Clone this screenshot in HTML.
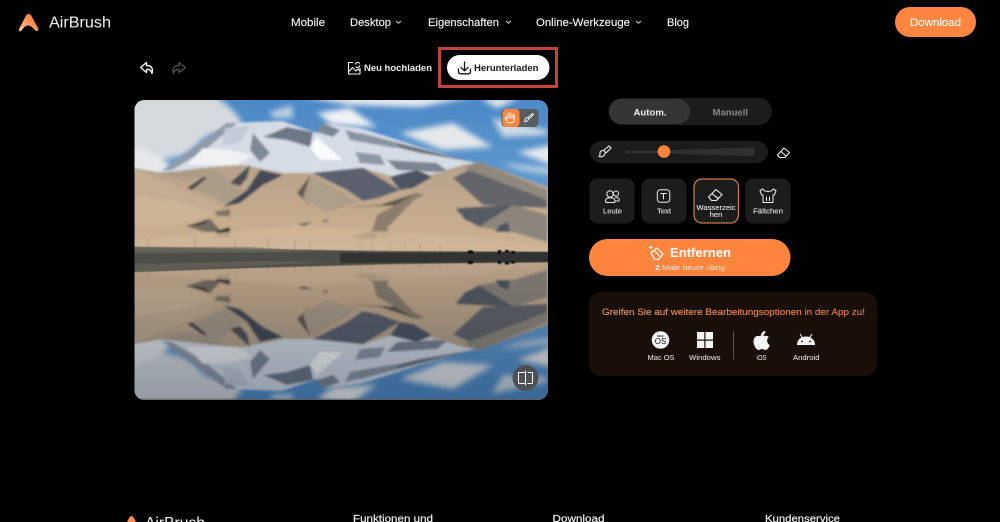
<!DOCTYPE html>
<html lang="de"><head><meta charset="utf-8"><title>AirBrush</title>
<style>
html,body{margin:0;padding:0;background:#000;width:1000px;height:522px;overflow:hidden}
svg{display:block}
text{font-family:"Liberation Sans",sans-serif}
</style></head><body>
<svg width="1000" height="522" viewBox="0 0 1000 522" xmlns="http://www.w3.org/2000/svg">
<defs>
<linearGradient id="logo" x1="0" y1="1" x2="1" y2="0"><stop offset="0" stop-color="#ffc09a"/><stop offset=".6" stop-color="#ff8e4f"/><stop offset="1" stop-color="#ff7a35"/></linearGradient>
<linearGradient id="sky" x1="0" y1="0" x2="0" y2="1"><stop offset="0" stop-color="#4b88c6"/><stop offset="1" stop-color="#6fa5d6"/></linearGradient>
<linearGradient id="promo" x1="0" y1="0" x2="1" y2="0"><stop offset="0" stop-color="#d9a06c"/><stop offset=".35" stop-color="#e98f50"/><stop offset="1" stop-color="#f4702e"/></linearGradient>
<linearGradient id="ground" x1="0" y1="0" x2="0" y2="1"><stop offset="0" stop-color="#b5a28c"/><stop offset=".5" stop-color="#c4aa8c"/><stop offset="1" stop-color="#cdb294"/></linearGradient>
<linearGradient id="refl" x1="0" y1="0" x2="0" y2="1"><stop offset="0" stop-color="#0a0f14" stop-opacity=".1"/><stop offset="1" stop-color="#0a1a2a" stop-opacity=".32"/></linearGradient>
<filter id="b1" x="-20%" y="-20%" width="140%" height="140%"><feGaussianBlur stdDeviation="1.100"/></filter>
<filter id="b05" x="-20%" y="-20%" width="140%" height="140%"><feGaussianBlur stdDeviation=".6"/></filter>
<filter id="b4" x="-30%" y="-30%" width="160%" height="160%"><feGaussianBlur stdDeviation="3"/></filter>
<clipPath id="photo"><rect x="134.500" y="100" width="413.500" height="300" rx="10"/></clipPath>
<clipPath id="upper"><rect x="130" y="96" width="425" height="158"/></clipPath>
<g id="scene" clip-path="url(#upper)">
<rect x="130" y="96" width="425" height="160" fill="url(#sky)"/>
<g filter="url(#b4)">
<path d="M130 96H215C235 110 245 122 240 128 225 135 210 130 200 142 185 160 165 160 130 162Z" fill="#d6d9dd"/>
<path d="M130 148C150 148 165 160 172 168 165 178 150 175 130 172Z" fill="#e6e8ea"/>
<path d="M317 113 350 108 377 127 333 125Z" fill="#f2f3f4"/>
<path d="M270 112 292 105 293 118 272 118Z" fill="#bcd0e2"/>
<path d="M400 133 453 123 493 147 443 150Z" fill="#e6e9eb"/>
<path d="M492 118 547 130 547 135 503 137Z" fill="#cfdae5"/>
<path d="M517 152 552 145 552 165Z" fill="#e6eaee"/>
<path d="M300 96H476L420 107 350 105Z" fill="#e8ecf0"/>
<path d="M480 98H520L497 108Z" fill="#e8ecf0"/>
<path d="M500 163 552 168 552 175 520 170Z" fill="#bcd0e2"/>
</g>
<g filter="url(#b1)">
<path d="M162 171 227 123 282 121 317 133 323 123 360 128 420 147 475 163 450 178 300 185 190 178Z" fill="#d5dce5"/>
<path d="M162 171 227 123 237 123 205 150 172 170Z" fill="#8f9bab"/>
<path d="M287 127 313 132 310 147 287 140 263 137Z" fill="#6d7785"/>
<path d="M253 133 270 153 260 162 250 150Z" fill="#7f8a98"/>
<path d="M317 132 323 123 340 130 333 137Z" fill="#7c8693"/>
<path d="M360 133 473 162 420 153 367 140Z" fill="#6b7380"/>
<path d="M345 130 400 143 395 148 350 140Z" fill="#8b95a2"/>
<path d="M387 160 437 163 450 173 397 170Z" fill="#7a8492"/>
<path d="M355 152 380 155 385 165 360 163Z" fill="#8d97a5"/>
<path d="M317 137 343 160 320 160 310 147Z" fill="#fafbfb"/>
<path d="M187 165 203 148 230 150 253 155 237 165 207 165Z" fill="#eff1f2"/>
<path d="M225 128 250 126 240 142 222 146Z" fill="#c3cbd6"/>
</g>
<g filter="url(#b1)">
<path d="M134 168 160 173 213 167 243 165 283 173 317 173 363 168 393 177 417 170 430 175 463 165 480 162 520 177 550 188 550 255 134 255Z" fill="url(#ground)"/>
<path d="M313 173 363 168 400 190 378 198 363 201 347 190Z" fill="#5b616e"/>
<path d="M390 177 417 170 432 177 413 188 400 190Z" fill="#4e5562"/>
<path d="M134 168 220 207 195 222 134 220Z" fill="#c3ad93"/>
<path d="M134 195 185 203 215 214 180 225 134 225Z" fill="#ccb497"/>
<path d="M160 174 213 168 243 190 228 205 200 192 187 188 205 176 185 180Z" fill="#ab9c88"/>
<path d="M187 188 203 177 207 178 192 190Z" fill="#4b4b4c"/>
<path d="M230 183 250 165 247 178 240 186Z" fill="#4f4f52"/>
<path d="M223 207 247 190 260 170 283 175 263 185 240 203Z" fill="#454a52"/>
<path d="M297 193 310 176 360 202 327 212 307 202Z" fill="#ad9e8a"/>
<path d="M297 193 310 176 303 198 312 208Z" fill="#5f5a52"/>
<path d="M344 208 380 205 417 193 424 195 400 205Z" fill="#59544b"/>
<path d="M377 215 417 193 424 195 414 200 387 228 392 238 360 240 372 232Z" fill="#8a7e6e"/>
<path d="M353 237 373 230 378 238 358 239Z" fill="#403e3b"/>
<path d="M453 178 473 168 547 195 547 208 483 205Z" fill="#63656a"/>
<path d="M463 168 480 162 547 190 547 200 495 180Z" fill="#8f887d"/>
<path d="M455 210 513 205 547 215 547 242 513 232 477 227Z" fill="#8b857b"/>
<path d="M456 208 513 205 480 226 465 220Z" fill="#575b63"/>
<path d="M500 225 508 222 510 232 495 232Z" fill="#4f5662"/>
<path d="M186 226 210 219 222 232 205 232Z" fill="#746d60"/>
<path d="M186 227 210 219 204 224Z" fill="#343433"/>
<path d="M216 231 230 227 230 237 218 237Z" fill="#3b3936"/>
<path d="M214 212 230 209 230 216 218 216Z" fill="#7e7566"/>
<path d="M298 224 312 222 304 226Z" fill="#55534d"/>
<path d="M322 221 328 219 326 222Z" fill="#4a4a48"/>
<path d="M134 240 300 226 480 238 550 248 550 255 134 255Z" fill="#d0b698" opacity=".85"/>
</g>
<g stroke="#8a7b68" stroke-width=".6" opacity=".6">
<path d="M148 239V247M195 238V249M235 239V250M268 238V250M295 240V251M310 240V251M360 243V252M372 243V252M390 243V252M405 243V252M420 244V252M440 245V253"/>
</g>
</g>
</defs>

<rect width="1000" height="522" fill="#000"/>

<!-- header -->
<path d="M28.500 14 C30.500 14 31 15 32 17 L38 28 C39.200 30.500 36.800 32 35 30.300 C32.500 27 30 25.500 28 25.500 C26 25.500 23.500 27.500 21.500 30.500 C20 32.200 18 31 19.500 28 L25.500 16.500 C26.300 15 27 14 28.500 14Z" fill="url(#logo)"/>
<text x="49" y="27.500" font-size="16" fill="#f2f2f2" textLength="62" lengthAdjust="spacingAndGlyphs">AirBrush</text>
<g font-size="11" fill="#f0f0f0" stroke="#f0f0f0" stroke-width=".15">
<text x="291" y="26" textLength="34" lengthAdjust="spacingAndGlyphs">Mobile</text>
<text x="350" y="26" textLength="41" lengthAdjust="spacingAndGlyphs">Desktop</text>
<text x="428" y="26" textLength="71" lengthAdjust="spacingAndGlyphs">Eigenschaften</text>
<text x="536" y="26" textLength="94" lengthAdjust="spacingAndGlyphs">Online-Werkzeuge</text>
<text x="667" y="26" textLength="22" lengthAdjust="spacingAndGlyphs">Blog</text>
</g>
<g fill="none" stroke="#d8d8d8" stroke-width="1">
<path d="M396 21 398.500 23.200 401 21"/><path d="M506 21 508.500 23.200 511 21"/><path d="M636 21 638.500 23.200 641 21"/>
</g>
<rect x="895" y="7" width="81" height="30" rx="15" fill="#ff8540"/>
<text x="910" y="26" font-size="11" fill="#fff" textLength="51" lengthAdjust="spacingAndGlyphs" stroke="#fff" stroke-width=".1">Download</text>

<!-- toolbar -->
<g fill="none" stroke-linejoin="round" stroke-linecap="round" stroke-width="1.400">
<path d="M146.500 62.500 140.500 67.500 146.500 72.500V69.500C149 68.800 151 70 152 73.500 153.500 68 151 65.500 146.500 65.500Z" stroke="#f2f2f2"/>
<path d="M179 62.500 185.500 67.500 179 72.500V69.500C176.500 68.800 174.500 70 173.500 73.500 172 68 174.500 65.500 179 65.500Z" stroke="#4d4d4d"/>
</g>
<g fill="none" stroke="#f2f2f2" stroke-width="1.100" stroke-linejoin="round">
<path d="M353 62.500H348.500V74H360V68"/><path d="M348.500 72 352.500 67.500 356 71 358 69 360 71"/><path d="M355 64.500C356 62 358.500 62 359.800 63.500M360 65.500C359 68 356.500 68 355.500 66.500"/>
</g>
<text x="364" y="71.200" font-size="9" font-weight="700" fill="#eee" textLength="68" lengthAdjust="spacingAndGlyphs">Neu hochladen</text>
<rect x="439.500" y="48.500" width="117" height="38" fill="none" stroke="#c0443c" stroke-width="3"/>
<rect x="447" y="55" width="102.500" height="25" rx="12.500" fill="#fff"/>
<g fill="none" stroke="#111" stroke-width="1.300" stroke-linecap="round" stroke-linejoin="round">
<path d="M464.500 62V70.500M461 67.500 464.500 70.800 468 67.500"/><path d="M458.500 69V71.500C458.500 73 459.500 73.800 461 73.800H468C469.500 73.800 470.500 73 470.500 71.500V69"/>
</g>
<text x="474" y="71" font-size="9" font-weight="700" fill="#1a1a1a" textLength="64.500" lengthAdjust="spacingAndGlyphs">Herunterladen</text>

<!-- photo -->
<g clip-path="url(#photo)">
<rect x="134" y="100" width="415" height="300" fill="#8aa0b8"/>
<use href="#scene"/>
<g transform="translate(0,512)"><g transform="scale(1,-1)"><use href="#scene"/></g></g>
<rect x="134" y="256" width="415" height="145" fill="url(#refl)"/>
<path d="M134 247 250 249 380 251 549 252V262L400 264 250 268 134 272Z" fill="#4e4e48" filter="url(#b05)"/>
<path d="M134 247H250L320 252 134 253Z" fill="#6e6d60" opacity=".7" filter="url(#b05)"/>
<path d="M134 264 260 261 330 262 134 272Z" fill="#66655a" opacity=".7" filter="url(#b05)"/>
<path d="M340 253 549 252V262L340 263Z" fill="#333331" filter="url(#b05)"/>
<g fill="#111" filter="url(#b05)"><rect x="468" y="250.500" width="5" height="3"/><rect x="498" y="250" width="3" height="4"/><rect x="505" y="250" width="4" height="2.500"/><rect x="511" y="251" width="4" height="2.500"/><rect x="468" y="261" width="5" height="3"/><rect x="498" y="261" width="3" height="3"/><rect x="505" y="262" width="4" height="2.500"/><rect x="511" y="261" width="4" height="2.500"/></g>
<rect x="134" y="398.500" width="415" height="2" fill="#5f6064" opacity=".7"/>
</g>

<!-- photo controls -->
<rect x="501.500" y="109" width="37" height="18" rx="4" fill="#5a5a5a" opacity=".95"/>
<rect x="502.500" y="109" width="17" height="18" rx="4" fill="#ff853f"/>
<path d="M507 119V114.500M509 118V112.500M511 118V112.800M513 118.500V114M507 119 506 117.500C505 117 504.700 118 505.300 119L507.500 122C508.500 123.300 513.500 123.500 514 120.500L514.500 115" fill="none" stroke="#fff" stroke-width=".9" stroke-linecap="round"/>
<path d="M525 119.500C526 117 528 117.500 528.500 118.800 528.500 121 526 122 524.500 121.500 525 121 525 120 525 119.500ZM528 117.500 532.500 113.500 533.500 114.500 529.300 118.800" fill="none" stroke="#fff" stroke-width=".9"/>
<circle cx="525.500" cy="378" r="13" fill="#4c4d50" opacity=".95"/>
<path d="M525 372.500H518.500V383.500H525M527.500 372.500H532.500V383.500H527.500" fill="none" stroke="#fff" stroke-width="1"/>
<path d="M525.500 370.500V385.500" stroke="#fff" stroke-width="1"/>

<!-- mode tabs -->
<rect x="608.500" y="98" width="163.500" height="27" rx="13.500" fill="#1d1d1d"/>
<rect x="609" y="99" width="81" height="25" rx="12.500" fill="#353535"/>
<text x="633.500" y="115.300" font-size="9.500" font-weight="700" fill="#eee" textLength="33" lengthAdjust="spacingAndGlyphs">Autom.</text>
<text x="712.500" y="115.300" font-size="9.500" font-weight="700" fill="#8a8a8a" textLength="35.500" lengthAdjust="spacingAndGlyphs">Manuell</text>

<!-- slider -->
<rect x="590" y="141" width="178" height="22" rx="11" fill="#1c1c1c"/>
<path d="M625.500 150.500H660L752 147.500C754 147.500 754.500 148.500 754.500 151 754.500 155 754 156 752 156L660 153.500H625.500Z" fill="#303030"/>
<circle cx="664" cy="151.500" r="6.300" fill="#ff853f"/>
<g fill="none" stroke="#f0f0f0" stroke-width="1.100" stroke-linejoin="round">
<path d="M600 152.500C601 150 603.500 150 605 151.500 606 154 603 158 599 156.500 600.500 155.500 600 154 600 152.500ZM604 150 609 146 611 148 606 153"/>
<path d="M777.500 155 784 148 789.500 152.500 785 157.500H779.500ZM781 151.500 786 156"/>
</g>

<!-- tiles -->
<g fill="#1c1c1c">
<rect x="589.500" y="178.500" width="45" height="45" rx="8"/>
<rect x="641.500" y="178.500" width="45" height="45" rx="8"/>
<rect x="745" y="178.500" width="45.500" height="45" rx="8"/>
</g>
<rect x="694" y="179" width="44.500" height="44" rx="8" fill="#1c1c1c" stroke="#c97a48" stroke-width="1.300"/>
<g fill="none" stroke="#eee" stroke-width="1" stroke-linejoin="round" stroke-linecap="round">
<circle cx="610" cy="194" r="3.200"/><circle cx="616" cy="193.500" r="2.500"/><path d="M606 202.500C604.500 199 607 197.800 610 197.800 613.500 197.800 616 199 614.500 202.500ZM615.500 197.300C618 197 620 198.500 618.800 201H615.500"/>
<rect x="657.300" y="189.800" width="12.500" height="12.500" rx="3"/><path d="M660.800 193.500H666.300M663.500 193.500V199"/>
<path d="M708.500 197 716 189.500 722 194.500 716.500 200.500H711.500ZM712 193.800 718.500 198.500" stroke-width="1.100"/>
<path d="M763 189 760 190.500 761.500 195H763V202.500H773V195H774.500L776 190.500 773 189C772 191.500 770.500 191 768 191.500 765.500 191 764 191.500 763 189ZM766.500 197V200.500M769.500 197V200.500"/>
</g>
<g font-size="7.500" fill="#e8e8e8" stroke="#e8e8e8" stroke-width=".1">
<text x="603" y="213.500" textLength="19" lengthAdjust="spacingAndGlyphs">Leute</text>
<text x="657" y="213.500" textLength="14" lengthAdjust="spacingAndGlyphs">Text</text>
<text x="696.500" y="210" textLength="39" lengthAdjust="spacingAndGlyphs">Wasserzeic</text>
<text x="709.500" y="217" textLength="13" lengthAdjust="spacingAndGlyphs">hen</text>
<text x="753" y="213.500" textLength="30" lengthAdjust="spacingAndGlyphs">Fältchen</text>
</g>

<!-- remove button -->
<rect x="589" y="239" width="201.500" height="37" rx="18.500" fill="#ff853f"/>
<g fill="none" stroke="#fff" stroke-width="1.200" stroke-linejoin="round">
<path d="M651 252.500 657 248 663 254 658.500 259.500H654.500ZM653.500 249.800 660 256.500"/><path d="M649 247.500H652.500M650.800 245.800V249.200" stroke-width=".9"/>
</g>
<text x="670" y="257" font-size="13" font-weight="700" fill="#fff" textLength="61" lengthAdjust="spacingAndGlyphs">Entfernen</text>
<text x="655" y="270" font-size="7.500" fill="#ffe3d0" textLength="70" lengthAdjust="spacingAndGlyphs"><tspan font-weight="700" fill="#fff">2</tspan> Male heute übrig</text>

<!-- promo panel -->
<rect x="589" y="292" width="288" height="84" rx="12" fill="#1a0f08"/>
<text x="602" y="315" font-size="9" fill="url(#promo)" textLength="263" lengthAdjust="spacingAndGlyphs" stroke="#e98f50" stroke-width=".1">Greifen Sie auf weitere Bearbeitungsoptionen in der App zu!</text>
<circle cx="660.500" cy="340" r="8.800" fill="#f5f5f5"/>
<text x="660.500" y="344" font-size="8" text-anchor="middle" fill="#1a0f08">OS</text>
<text x="660.500" y="337" font-size="3" font-weight="700" text-anchor="middle" fill="#1a0f08">MAC</text>
<path d="M697 332H704.300V339.500H697ZM705.500 332H713V339.500H705.500ZM697 340.700H704.300V348H697ZM705.500 340.700H713V348H705.500Z" fill="#f5f5f5"/>
<rect x="733" y="331" width="1" height="28" fill="#5c534c"/>
<path d="M765.500 336C762 334.500 760 336 758.500 336 756 335.500 753.500 338 753.500 341.500 753.500 345.500 756.500 350 758.500 350 760 350 760.500 349 762 349 763.500 349 764 350 765.500 350 767.500 350 769.500 346.500 769.800 345 767 344 766 339 768.800 337.300 768 336 766.500 335.800 765.500 336Z" fill="#f5f5f5"/>
<path d="M761 335.500C761 333 763 331 765.500 331 765.500 333.500 763.500 335.500 761 335.500Z" fill="#f5f5f5"/>
<path d="M797 345C797 339.500 801 336.500 806 336.500 811 336.500 815 339.500 815 345Z" fill="#f5f5f5"/>
<path d="M800 334 802.500 338M812 334 809.500 338" stroke="#f5f5f5" stroke-width="1"/>
<circle cx="802" cy="341.500" r=".9" fill="#1a0f08"/><circle cx="810" cy="341.500" r=".9" fill="#1a0f08"/>
<g font-size="7.500" fill="#ddd" stroke="#ddd" stroke-width=".08">
<text x="647.500" y="360" textLength="27" lengthAdjust="spacingAndGlyphs">Mac OS</text>
<text x="689" y="360" textLength="31.500" lengthAdjust="spacingAndGlyphs">Windows</text>
<text x="756.500" y="360" textLength="10" lengthAdjust="spacingAndGlyphs">iOS</text>
<text x="793" y="360" textLength="26.500" lengthAdjust="spacingAndGlyphs">Android</text>
</g>

<!-- footer -->
<path d="M131.500 516 C133 516 134 518 136 522 H127 C129 518 130 516 131.500 516Z" fill="#ff8a4a"/>
<text x="145" y="528" font-size="16" fill="#eee" textLength="60" lengthAdjust="spacingAndGlyphs">AirBrush</text>
<g font-size="10.500" fill="#eee" stroke="#eee" stroke-width=".2">
<text x="353" y="522" textLength="80" lengthAdjust="spacingAndGlyphs">Funktionen und</text>
<text x="552.500" y="522" textLength="52" lengthAdjust="spacingAndGlyphs">Download</text>
<text x="765" y="522" textLength="75" lengthAdjust="spacingAndGlyphs">Kundenservice</text>
</g>
</svg>
</body></html>
